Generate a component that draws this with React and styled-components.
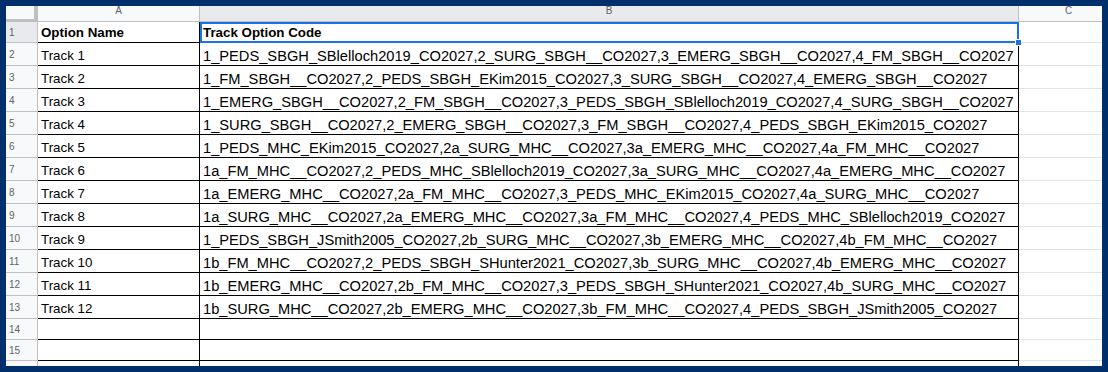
import React from "react";
import styled, { createGlobalStyle } from "styled-components";

const GlobalStyle = createGlobalStyle`
  html, body { margin: 0; padding: 0; background: #fff; }
  body { font-family: "Liberation Sans", Arial, sans-serif; }
`;

const COLS = "32px 162px 819px 100px";

const Frame = styled.div`
  width: 1108px;
  height: 372px;
  box-sizing: border-box;
  border: 6px solid #002f6c;
  background: #fff;
  overflow: hidden;
`;

const Sheet = styled.div`
  width: 1113px;
  display: flex;
  flex-direction: column;
`;

const Row = styled.div`
  display: grid;
  grid-template-columns: ${COLS};
  height: ${(p) => p.$h}px;
  flex: none;
`;

const Corner = styled.div`
  box-sizing: border-box;
  background: #f8f9fa;
  border-right: 4px solid #c0c0c0;
  border-bottom: 4px solid #c0c0c0;
  margin-bottom: -1px;
`;

const ColHeader = styled.div`
  box-sizing: border-box;
  background: ${(p) => (p.$selected ? "#e8eaed" : "#f8f9fa")};
  border-right: 1px solid #c0c0c0;
  border-bottom: 1px solid #c0c0c0;
  color: #5f6368;
  font-size: 10px;
  line-height: 10px;
  text-align: center;
`;

const RowNum = styled.div`
  box-sizing: border-box;
  background: ${(p) => (p.$selected ? "#e8eaed" : "#f8f9fa")};
  border-right: 1px solid #c0c0c0;
  border-bottom: 1px solid #c0c0c0;
  color: #5f6368;
  font-size: 10px;
  display: flex;
  align-items: center;
  padding-left: 3px;
`;

const Cell = styled.div`
  position: relative;
  box-sizing: border-box;
  border-right: 1px solid #000;
  border-bottom: 1px solid #000;
  display: flex;
  align-items: flex-end;
  padding: 0 3px ${(p) => (p.$code ? 1 : 2)}px 3px;
  font-size: ${(p) => (p.$code ? "14.67px" : "13.33px")};
  line-height: ${(p) => (p.$code ? "16px" : "15px")};
  color: #000;
  font-weight: ${(p) => (p.$bold ? 700 : 400)};
  white-space: nowrap;
`;

const BlankCell = styled.div`
  box-sizing: border-box;
  border-right: 1px solid #e2e3e3;
  border-bottom: 1px solid #e2e3e3;
`;

const Selection = styled.div`
  position: absolute;
  top: 0;
  left: 0;
  right: -1px;
  bottom: -1px;
  border: 2px solid #1a73e8;
  pointer-events: none;
  z-index: 2;
`;

const Handle = styled.div`
  position: absolute;
  right: -4px;
  bottom: -4px;
  width: 7px;
  height: 7px;
  box-sizing: border-box;
  background: #1a73e8;
  border: 1px solid #fff;
  z-index: 3;
`;

const data = [
  ["Track 1", "1_PEDS_SBGH_SBlelloch2019_CO2027,2_SURG_SBGH__CO2027,3_EMERG_SBGH__CO2027,4_FM_SBGH__CO2027"],
  ["Track 2", "1_FM_SBGH__CO2027,2_PEDS_SBGH_EKim2015_CO2027,3_SURG_SBGH__CO2027,4_EMERG_SBGH__CO2027"],
  ["Track 3", "1_EMERG_SBGH__CO2027,2_FM_SBGH__CO2027,3_PEDS_SBGH_SBlelloch2019_CO2027,4_SURG_SBGH__CO2027"],
  ["Track 4", "1_SURG_SBGH__CO2027,2_EMERG_SBGH__CO2027,3_FM_SBGH__CO2027,4_PEDS_SBGH_EKim2015_CO2027"],
  ["Track 5", "1_PEDS_MHC_EKim2015_CO2027,2a_SURG_MHC__CO2027,3a_EMERG_MHC__CO2027,4a_FM_MHC__CO2027"],
  ["Track 6", "1a_FM_MHC__CO2027,2_PEDS_MHC_SBlelloch2019_CO2027,3a_SURG_MHC__CO2027,4a_EMERG_MHC__CO2027"],
  ["Track 7", "1a_EMERG_MHC__CO2027,2a_FM_MHC__CO2027,3_PEDS_MHC_EKim2015_CO2027,4a_SURG_MHC__CO2027"],
  ["Track 8", "1a_SURG_MHC__CO2027,2a_EMERG_MHC__CO2027,3a_FM_MHC__CO2027,4_PEDS_MHC_SBlelloch2019_CO2027"],
  ["Track 9", "1_PEDS_SBGH_JSmith2005_CO2027,2b_SURG_MHC__CO2027,3b_EMERG_MHC__CO2027,4b_FM_MHC__CO2027"],
  ["Track 10", "1b_FM_MHC__CO2027,2_PEDS_SBGH_SHunter2021_CO2027,3b_SURG_MHC__CO2027,4b_EMERG_MHC__CO2027"],
  ["Track 11", "1b_EMERG_MHC__CO2027,2b_FM_MHC__CO2027,3_PEDS_SBGH_SHunter2021_CO2027,4b_SURG_MHC__CO2027"],
  ["Track 12", "1b_SURG_MHC__CO2027,2b_EMERG_MHC__CO2027,3b_FM_MHC__CO2027,4_PEDS_SBGH_JSmith2005_CO2027"],
];

export default function App() {
  return (
    <>
      <GlobalStyle />
      <Frame>
        <Sheet>
          <Row $h={16}>
            <Corner />
            <ColHeader>A</ColHeader>
            <ColHeader $selected>B</ColHeader>
            <ColHeader>C</ColHeader>
          </Row>
          <Row $h={21}>
            <RowNum $selected>1</RowNum>
            <Cell $bold>Option Name</Cell>
            <Cell $bold>
              Track Option Code
              <Selection />
              <Handle />
            </Cell>
            <BlankCell />
          </Row>
          {data.map(([name, code], i) => (
            <Row $h={23} key={name}>
              <RowNum>{i + 2}</RowNum>
              <Cell>{name}</Cell>
              <Cell $code>{code}</Cell>
              <BlankCell />
            </Row>
          ))}
          {[14, 15].map((n) => (
            <Row $h={21} key={n}>
              <RowNum>{n}</RowNum>
              <Cell />
              <Cell />
              <BlankCell />
            </Row>
          ))}
          <Row $h={21}>
            <RowNum />
            <Cell />
            <Cell />
            <BlankCell />
          </Row>
        </Sheet>
      </Frame>
    </>
  );
}
